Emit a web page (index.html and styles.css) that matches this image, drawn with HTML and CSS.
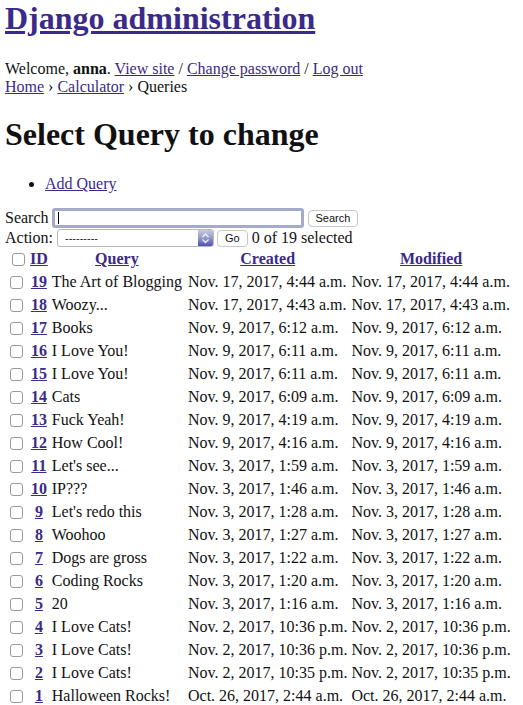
FILE: index.html
```html
<!DOCTYPE html>
<html>
<head>
<meta charset="utf-8">
<link rel="stylesheet" href="styles.css">
</head>
<body>
<div class="branding"><h1 class="site-name"><a href="#">Django administration</a></h1></div>
<div class="user-tools">Welcome, <strong>anna</strong>. <a href="#">View site</a> / <a href="#">Change password</a> / <a href="#">Log out</a></div>
<div class="breadcrumbs"><a href="#">Home</a> › <a href="#">Calculator</a> › Queries</div>
<h1 class="title">Select Query to change</h1>
<ul class="object-tools"><li><a href="#">Add Query</a></li></ul>
<div class="search">Search <span class="search-box"><span class="caret"></span></span><button class="btn">Search</button></div>
<div class="actions">Action: <span class="select"><span class="select-text">---------</span><span class="select-arrow"><svg width="15" height="16" viewBox="0 0 15 16"><path d="M4.5 7 L7.5 4 L10.5 7 M4.5 9.5 L7.5 12.5 L10.5 9.5" fill="none" stroke="#eef0f8" stroke-width="1.4"/></svg></span></span><button class="btn">Go</button><span class="count">0 of 19 selected</span></div>
<table class="results">
<thead><tr><th class="cb"><span class="box"></span></th><th><a href="#">ID</a></th><th class="q"><a href="#">Query</a></th><th><a href="#">Created</a></th><th><a href="#">Modified</a></th></tr></thead>
<tbody>
<tr><td class="cb"><span class="box"></span></td><th><a href="#">19</a></th><td class="q">The Art of Blogging</td><td>Nov. 17, 2017, 4:44 a.m.</td><td>Nov. 17, 2017, 4:44 a.m.</td></tr>
<tr><td class="cb"><span class="box"></span></td><th><a href="#">18</a></th><td class="q">Woozy...</td><td>Nov. 17, 2017, 4:43 a.m.</td><td>Nov. 17, 2017, 4:43 a.m.</td></tr>
<tr><td class="cb"><span class="box"></span></td><th><a href="#">17</a></th><td class="q">Books</td><td>Nov. 9, 2017, 6:12 a.m.</td><td>Nov. 9, 2017, 6:12 a.m.</td></tr>
<tr><td class="cb"><span class="box"></span></td><th><a href="#">16</a></th><td class="q">I Love You!</td><td>Nov. 9, 2017, 6:11 a.m.</td><td>Nov. 9, 2017, 6:11 a.m.</td></tr>
<tr><td class="cb"><span class="box"></span></td><th><a href="#">15</a></th><td class="q">I Love You!</td><td>Nov. 9, 2017, 6:11 a.m.</td><td>Nov. 9, 2017, 6:11 a.m.</td></tr>
<tr><td class="cb"><span class="box"></span></td><th><a href="#">14</a></th><td class="q">Cats</td><td>Nov. 9, 2017, 6:09 a.m.</td><td>Nov. 9, 2017, 6:09 a.m.</td></tr>
<tr><td class="cb"><span class="box"></span></td><th><a href="#">13</a></th><td class="q">Fuck Yeah!</td><td>Nov. 9, 2017, 4:19 a.m.</td><td>Nov. 9, 2017, 4:19 a.m.</td></tr>
<tr><td class="cb"><span class="box"></span></td><th><a href="#">12</a></th><td class="q">How Cool!</td><td>Nov. 9, 2017, 4:16 a.m.</td><td>Nov. 9, 2017, 4:16 a.m.</td></tr>
<tr><td class="cb"><span class="box"></span></td><th><a href="#">11</a></th><td class="q">Let's see...</td><td>Nov. 3, 2017, 1:59 a.m.</td><td>Nov. 3, 2017, 1:59 a.m.</td></tr>
<tr><td class="cb"><span class="box"></span></td><th><a href="#">10</a></th><td class="q">IP???</td><td>Nov. 3, 2017, 1:46 a.m.</td><td>Nov. 3, 2017, 1:46 a.m.</td></tr>
<tr><td class="cb"><span class="box"></span></td><th><a href="#">9</a></th><td class="q">Let's redo this</td><td>Nov. 3, 2017, 1:28 a.m.</td><td>Nov. 3, 2017, 1:28 a.m.</td></tr>
<tr><td class="cb"><span class="box"></span></td><th><a href="#">8</a></th><td class="q">Woohoo</td><td>Nov. 3, 2017, 1:27 a.m.</td><td>Nov. 3, 2017, 1:27 a.m.</td></tr>
<tr><td class="cb"><span class="box"></span></td><th><a href="#">7</a></th><td class="q">Dogs are gross</td><td>Nov. 3, 2017, 1:22 a.m.</td><td>Nov. 3, 2017, 1:22 a.m.</td></tr>
<tr><td class="cb"><span class="box"></span></td><th><a href="#">6</a></th><td class="q">Coding Rocks</td><td>Nov. 3, 2017, 1:20 a.m.</td><td>Nov. 3, 2017, 1:20 a.m.</td></tr>
<tr><td class="cb"><span class="box"></span></td><th><a href="#">5</a></th><td class="q">20</td><td>Nov. 3, 2017, 1:16 a.m.</td><td>Nov. 3, 2017, 1:16 a.m.</td></tr>
<tr><td class="cb"><span class="box"></span></td><th><a href="#">4</a></th><td class="q">I Love Cats!</td><td>Nov. 2, 2017, 10:36 p.m.</td><td>Nov. 2, 2017, 10:36 p.m.</td></tr>
<tr><td class="cb"><span class="box"></span></td><th><a href="#">3</a></th><td class="q">I Love Cats!</td><td>Nov. 2, 2017, 10:36 p.m.</td><td>Nov. 2, 2017, 10:36 p.m.</td></tr>
<tr><td class="cb"><span class="box"></span></td><th><a href="#">2</a></th><td class="q">I Love Cats!</td><td>Nov. 2, 2017, 10:35 p.m.</td><td>Nov. 2, 2017, 10:35 p.m.</td></tr>
<tr><td class="cb"><span class="box"></span></td><th><a href="#">1</a></th><td class="q">Halloween Rocks!</td><td>Oct. 26, 2017, 2:44 a.m.</td><td>Oct. 26, 2017, 2:44 a.m.</td></tr>
</tbody>
</table>
</body>
</html>
```
FILE: styles.css
```css
html, body {
  margin: 0;
  padding: 0;
  background: #fff;
}
body {
  padding: 0 5px;
  font-family: "Liberation Serif", "Times New Roman", serif;
  font-size: 16px;
  line-height: 18px;
  color: #111;
}
a {
  color: #3b2a8a;
}
.site-name {
  font-size: 32px;
  line-height: 36px;
  margin: 0 0 24px 0;
  font-weight: bold;
}
.user-tools, .breadcrumbs {
  line-height: 18px;
}
.title {
  font-size: 32px;
  line-height: 36px;
  margin: 20px 0 23px 0;
  font-weight: bold;
}
.object-tools {
  margin: 0 0 15px 0;
  padding-left: 40px;
}
.search, .actions {
  display: flex;
  align-items: center;
  line-height: 18px;
}
.search { height: 20px; }
.actions { height: 20px; }
.search-box {
  display: inline-block;
  width: 246px;
  height: 14px;
  border: 3px solid #a3abc8;
  border-radius: 3px;
  background: #fff;
  position: relative;
  margin-left: 3px;
}
.caret {
  position: absolute;
  left: 3px;
  top: 1px;
  width: 1px;
  height: 12px;
  background: #000;
}
.btn {
  font-family: "Liberation Sans", Arial, sans-serif;
  font-size: 11px;
  height: 17px;
  padding: 0 7px;
  border: 1px solid #c7c7c7;
  border-radius: 4px;
  background: #fff;
  color: #111;
  line-height: 15px;
}
.search .btn { margin-left: 4px; }
.actions .btn { margin-left: 3px; }
.count { margin-left: 4px; }
.select {
  display: inline-flex;
  width: 155px;
  height: 16px;
  border: 1px solid #b9b9b9;
  border-radius: 3px;
  background: #fff;
  margin-left: 4px;
  overflow: hidden;
  position: relative;
}
.select-text {
  font-family: "Liberation Sans", Arial, sans-serif;
  font-size: 11px;
  line-height: 16px;
  padding-left: 7px;
  flex: 1;
  color: #222;
}
.select-arrow {
  display: block;
  width: 15px;
  height: 16px;
  background: linear-gradient(180deg, #c5c9de 0%, #9aa1cb 45%, #4a52b2 100%);
}
.select-arrow svg { display: block; }
.results {
  border-spacing: 2px;
  margin-left: -1px;
  margin-top: -2px;
}
.results th, .results td {
  padding: 1px 1px;
  line-height: 19px;
  white-space: nowrap;
  text-align: left;
}
.results th {
  text-align: center;
}
.results .q {
  padding-right: 3px;
}
.cb {
  width: 19px;
}
.box {
  display: inline-block;
  width: 11px;
  height: 11px;
  border: 1px solid #9a9a9a;
  border-radius: 3px;
  background: #fff;
  vertical-align: -2px;
  margin-left: 3px;
}
```
